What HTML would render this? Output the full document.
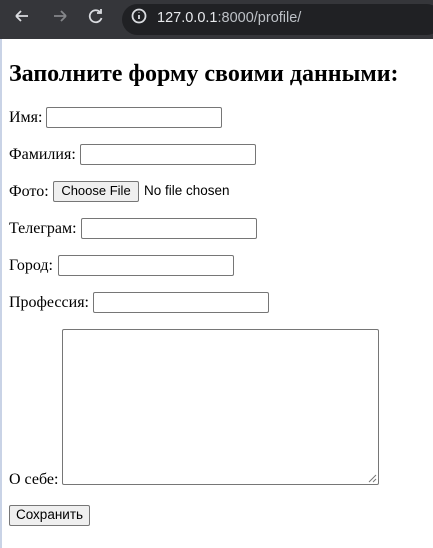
<!DOCTYPE html>
<html><head><meta charset="utf-8"><style>
body{margin:0;width:433px;height:548px;position:relative;overflow:hidden;background:#fff;font-family:"Liberation Serif",serif;font-size:16px;color:#000}
.bar{position:absolute;left:0;top:0;width:433px;height:39px;background:#35363a}
.url{position:absolute;left:122px;top:4px;width:320px;height:31px;border-radius:16px;background:#202124}
.edge{position:absolute;left:0;top:39px;width:2px;height:509px;background:#c9d3e6}
.t{position:absolute;white-space:nowrap}
.in{position:absolute;height:19px;border:1px solid #767676;border-radius:2px;width:174px;background:#fff}
.btn{position:absolute;border:1px solid #767676;border-radius:2px;background:#efefef;font-family:"Liberation Sans",sans-serif;font-size:13px;text-align:center;line-height:18px}
</style></head><body>
<div class="bar"><div class="url"></div>
<svg style="position:absolute;left:0;top:0" width="433" height="39">
<g stroke="#dadce0" stroke-width="1.8" fill="none">
<path d="M16 16h12M16 16l5-5M16 16l5 5"/>
<path d="M54 16h12M66 16l-5-5M66 16l-5 5" stroke="#85878a"/>
<path d="M100 12a6 6 0 1 0 1.5 6"/><path d="M101 9v4h-4"/>
<circle cx="139" cy="16" r="6.5"/><path d="M139 15v4M139 12.5v.5"/>
</g>
<text x="157" y="22" font-family="Liberation Sans" font-size="14.5" fill="#e8eaed">127.0.0.1<tspan fill="#bdc1c6">:8000/profile/</tspan></text>
</svg></div>
<div class="edge"></div>
<div class="t" style="left:9px;top:61px;font-size:24px;font-weight:bold">Заполните форму своими данными:</div>
<div class="t" style="left:9px;top:109px">Имя:</div><div class="in" style="left:46px;top:107px"></div>
<div class="t" style="left:9px;top:146px">Фамилия:</div><div class="in" style="left:80px;top:144px"></div>
<div class="t" style="left:9px;top:183px">Фото:</div><div class="btn" style="left:53px;top:181px;width:84px;height:19px">Choose File</div>
<div class="t" style="left:144px;top:183px;font-family:'Liberation Sans',sans-serif;font-size:13.5px">No file chosen</div>
<div class="t" style="left:9px;top:220px">Телеграм:</div><div class="in" style="left:81px;top:218px"></div>
<div class="t" style="left:9px;top:257px">Город:</div><div class="in" style="left:58px;top:255px"></div>
<div class="t" style="left:9px;top:294px">Профессия:</div><div class="in" style="left:93px;top:292px"></div>
<div class="t" style="left:9px;top:471px">О себе:</div>
<div class="in" style="left:62px;top:329px;width:315px;height:154px"></div>
<svg style="position:absolute;left:368px;top:474px" width="9" height="9"><path d="M1 8L8 1M5 8L8 5" stroke="#777" stroke-width="1"/></svg>
<div class="btn" style="left:9px;top:505px;width:79px;height:19px;font-size:13.5px">Сохранить</div>
</body></html>
